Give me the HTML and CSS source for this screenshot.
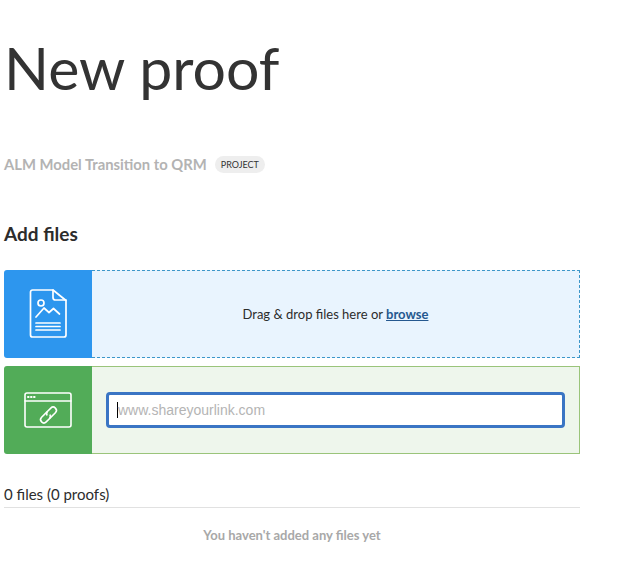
FILE: index.html
```html
<!DOCTYPE html>
<html lang="en">
<head>
<meta charset="utf-8">
<title>New proof</title>
<link rel="stylesheet" href="styles.css">
</head>
<body>
<main class="page">
  <h1 class="title">New proof</h1>
  <div class="project">
    <span class="project-name">ALM Model Transition to QRM</span>
    <span class="badge">PROJECT</span>
  </div>
  <h2 class="heading">Add files</h2>
  <section class="row row-drop">
    <div class="tile tile-blue">
      <svg width="38" height="50" viewBox="0 0 38 50" fill="none" stroke="#fff" stroke-width="1.700" stroke-linejoin="round" stroke-linecap="round">
        <path d="M3.500 1h20.500L37 11.500V46a2 2 0 0 1-2 2H3.500a2 2 0 0 1-2-2V3a2 2 0 0 1 2-2z"/>
        <path d="M24 1v7.500a2.500 2.500 0 0 0 2.500 2.500H37"/>
        <circle cx="12" cy="14" r="3"/>
        <path d="M7 28l8-9 5 4.500 4.500-4 6 5.500"/>
        <path d="M7 34h24M7 37.500h24M7 41h24"/>
      </svg>
    </div>
    <div class="drop-body">
      <span>Drag &amp; drop files here or <a class="browse" href="#">browse</a></span>
    </div>
  </section>
  <section class="row row-link">
    <div class="tile tile-green">
      <svg width="48" height="36" viewBox="0 0 48 36" fill="none" stroke="#fff" stroke-width="1.600" stroke-linejoin="round" stroke-linecap="round">
        <rect x="1" y="1" width="46" height="34" rx="2"/>
        <path d="M1 9h46"/>
        <path d="M4 5h.6M7 5h.6M10 5h.6" stroke-width="2"/>
        <g transform="translate(24.500 23) rotate(-45)">
          <path d="M-1.500 3.250H6.500a3.250 3.250 0 0 0 0-6.500H2a3.250 3.250 0 0 0-3 2"/>
          <path d="M1.500-3.250H-6.500a3.250 3.250 0 0 0 0 6.500H-2a3.250 3.250 0 0 0 3-2"/>
        </g>
      </svg>
    </div>
    <div class="link-body">
      <div class="link-input">
        <span class="caret"></span><span class="placeholder">www.shareyourlink.com</span>
      </div>
    </div>
  </section>
  <div class="count">0 files (0 proofs)</div>
  <p class="empty">You haven't added any files yet</p>
</main>
</body>
</html>
```

FILE: styles.css
```css
* { box-sizing: border-box; }
html, body { margin: 0; padding: 0; background: #fff; }
body {
  font-family: Lato, "Noto Sans", sans-serif;
  color: #2c2c2c;
  height: 576px;
  overflow: hidden;
}
.page { width: 580px; margin-left: 4px; display: flex; flex-direction: column; }
.title {
  margin: 27px 0 0;
  font-size: 59px;
  font-weight: 400;
  line-height: 82px;
  color: #333;
}
.project { display: flex; align-items: center; gap: 8px; margin-top: 43px; height: 24px; }
.project-name { font-size: 14.800px; font-weight: 700; color: #b3b3b3; }
.badge {
  background: #eee;
  color: #333;
  font-size: 9px;
  line-height: 17px;
  height: 17px;
  padding: 0 6px;
  border-radius: 9px;
}
.heading {
  margin: 45px 0 0;
  font-size: 19px;
  font-weight: 700;
  line-height: 26px;
  color: #2c2c2c;
}
.row { display: flex; height: 88px; width: 576px; }
.row-drop { margin-top: 23px; }
.row-link { margin-top: 8px; }
.tile {
  width: 88px;
  flex: none;
  display: flex;
  align-items: center;
  justify-content: center;
  border-radius: 3px 0 0 3px;
}
.tile-blue { background: #2d96ee; }
.tile-green { background: #52ac58; }
.drop-body {
  flex: 1;
  display: flex;
  align-items: center;
  justify-content: center;
  background: #e9f4fe;
  border: 1px dashed #3d97c9;
  border-left: none;
  font-size: 13px;
  color: #2c2c2c;
}
.browse { color: #25588f; font-weight: 700; }
.link-body {
  flex: 1;
  display: flex;
  align-items: center;
  padding: 0 14px;
  background: #eef6ec;
  border: 1px solid #9ac47a;
  border-left: none;
}
.link-input {
  flex: 1;
  height: 36px;
  display: flex;
  align-items: center;
  padding-left: 8px;
  background: #fff;
  border: 3px solid #3a75c4;
  border-radius: 4px;
}
.caret { width: 1px; height: 16px; background: #000; flex: none; }
.placeholder {
  font-family: "Liberation Sans", Arial, sans-serif;
  font-size: 14px;
  color: #b4b4b4;
}
.count {
  margin-top: 29px;
  height: 25px;
  line-height: 22px;
  width: 576px;
  font-size: 15px;
  color: #2c2c2c;
  border-bottom: 1px solid #e1e1e1;
}
.empty {
  width: 576px;
  margin: 19px 0 0;
  text-align: center;
  font-size: 13px;
  font-weight: 700;
  color: #a8a8a8;
  line-height: 16px;
}
```
